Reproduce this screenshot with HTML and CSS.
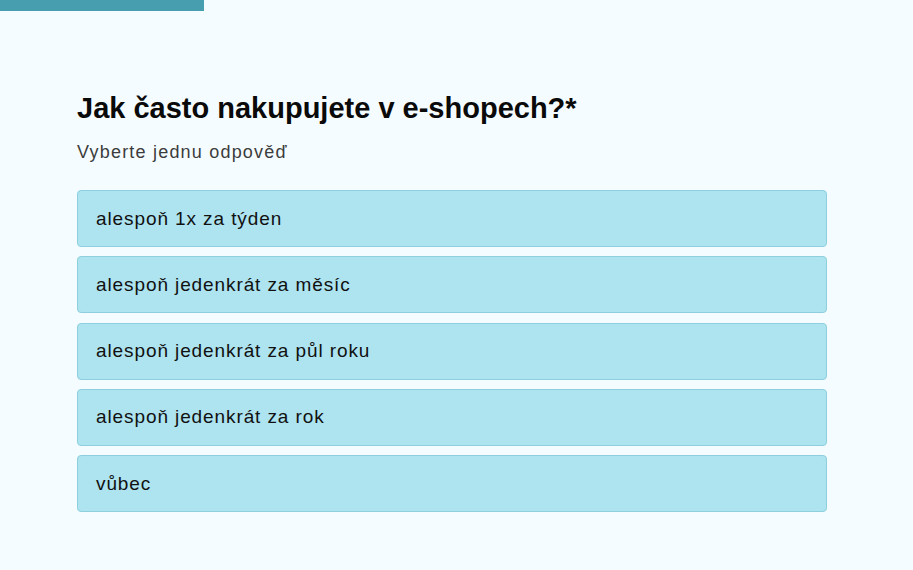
FILE: index.html
```html
<!DOCTYPE html>
<html lang="cs">
<head>
  <meta charset="UTF-8">
  <meta name="viewport" content="width=device-width, initial-scale=1.0">
  <title>Dotazník</title>
  <link rel="stylesheet" href="styles.css">
</head>
<body>
  <div class="progress"><div class="progress-bar"></div></div>
  <main class="question">
    <h1>Jak často nakupujete v e-shopech?*</h1>
    <p class="hint">Vyberte jednu odpověď</p>
    <div class="options">
      <button class="option">alespoň 1x za týden</button>
      <button class="option">alespoň jedenkrát za měsíc</button>
      <button class="option">alespoň jedenkrát za půl roku</button>
      <button class="option">alespoň jedenkrát za rok</button>
      <button class="option">vůbec</button>
    </div>
  </main>
</body>
</html>
```

FILE: styles.css
```css
/* General */
body {
  margin: 0;
  padding: 0;
  background-color: #f5fcff;
  font-family: "Liberation Sans", Arial, sans-serif;
  color: #000;
}
.progress {
  height: 11px;
}
.progress-bar {
  width: 204px;
  height: 100%;
  background-color: #479eae;
}
/* Question */
.question {
  padding: 79px 86px 0 77px;
}
.question h1 {
  margin: 0;
  font-size: 29px;
  font-weight: bold;
  line-height: 36px;
  color: #0a0a0a;
}
.hint {
  margin: 14px 0 26px 0;
  font-size: 18px;
  letter-spacing: 1.2px;
  color: #3c3c3c;
  line-height: 24px;
}
.options {
  display: flex;
  flex-direction: column;
  gap: 9.25px;
}
.option {
  height: 57px;
  padding: 0 18px;
  text-align: left;
  font-family: inherit;
  font-size: 19px;
  letter-spacing: 0.9px;
  color: #111;
  background-color: #ade4f0;
  border: 1px solid #8dcfdd;
  border-radius: 4px;
  cursor: pointer;
}
.option:hover {
  background-color: #9cdcea;
}
```
